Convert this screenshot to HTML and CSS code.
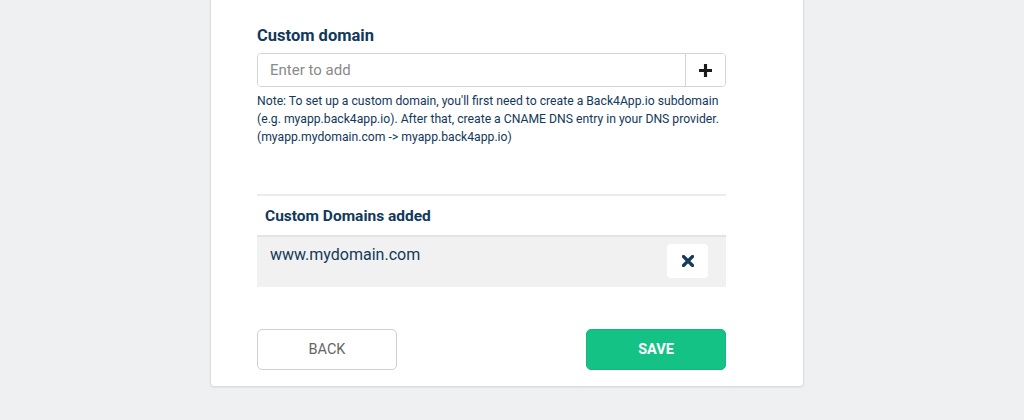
FILE: index.html
```html
<!DOCTYPE html>
<html>
<head>
<meta charset="utf-8">
<link rel="stylesheet" href="styles.css">
</head>
<body>
<div class="card">
  <h2 class="title">Custom domain</h2>
  <div class="input-group">
    <input class="input" type="text" placeholder="Enter to add">
    <button class="add-btn" aria-label="Add">
      <svg width="13" height="13" viewBox="0 0 14 14"><path d="M5.3 0h3.4v5.3H14v3.4H8.7V14H5.3V8.7H0V5.3h5.3z" fill="#1b1b1b"/></svg>
    </button>
  </div>
  <p class="note">Note: To set up a custom domain, you'll first need to create a Back4App.io subdomain (e.g. myapp.back4app.io). After that, create a CNAME DNS entry in your DNS provider. (myapp.mydomain.com -&gt; myapp.back4app.io)</p>
  <div class="list">
    <h3 class="list-title">Custom Domains added</h3>
    <div class="row">
      <span class="domain">www.mydomain.com</span>
      <button class="remove-btn" aria-label="Remove">
        <svg width="12" height="12" viewBox="0 0 12 12"><path d="M1.5 1.5l9 9M10.5 1.5l-9 9" stroke="#163b5c" stroke-width="3.2" stroke-linecap="round"/></svg>
      </button>
    </div>
  </div>
  <div class="actions">
    <button class="btn btn-back">BACK</button>
    <button class="btn btn-save">SAVE</button>
  </div>
</div>
</body>
</html>
```

FILE: styles.css
```css
* { box-sizing: border-box; }
html, body { margin: 0; padding: 0; }
body {
  background: #eff0f2;
  font-family: Roboto, "Liberation Sans", Arial, sans-serif;
  height: 420px;
  overflow: hidden;
}
.card {
  width: 594px;
  margin: -4px 0 0 210px;
  background: #fff;
  border: 1px solid #dcdcdc;
  border-radius: 4px;
  box-shadow: 0 1px 2px rgba(0,0,0,0.06);
  padding: 27px 77px 16px 46px;
}
.title {
  margin: 0 0 5px;
  font-size: 16.5px;
  line-height: 24px;
  font-weight: 700;
  color: #12395a;
}
.input-group {
  display: flex;
  height: 34px;
  border: 1px solid #d4d4d4;
  border-radius: 4px;
  overflow: hidden;
}
.input {
  flex: 1;
  border: none;
  outline: none;
  padding: 0 12px;
  font-family: inherit;
  font-size: 15px;
  color: #333;
  background: #fff;
}
.input::placeholder { color: #8a8a8a; }
.add-btn {
  width: 40px;
  border: none;
  border-left: 1px solid #d4d4d4;
  background: #fff;
  display: flex;
  align-items: center;
  justify-content: center;
  padding: 0;
}
.note {
  margin: 5px -6px 0 0;
  font-size: 12.2px;
  line-height: 18px;
  color: #12395a;
}
.list {
  margin-top: 48px;
  border-top: 2px solid #ebebeb;
}
.list-title {
  margin: 0;
  height: 39px;
  display: flex;
  align-items: center;
  padding-left: 8px;
  font-size: 15.5px;
  font-weight: 700;
  color: #12395a;
}
.row {
  display: flex;
  align-items: flex-start;
  justify-content: space-between;
  height: 52px;
  background: #f1f1f1;
  border-top: 2px solid #e4e4e4;
  padding: 7px 17px 0 13px;
}
.domain {
  font-size: 16px;
  line-height: 22px;
  color: #12395a;
}
.remove-btn {
  width: 41px;
  height: 34px;
  margin: 0 1px 0 0;
  border: none;
  border-radius: 4px;
  background: #fff;
  display: flex;
  align-items: center;
  justify-content: center;
  padding: 0;
}
.actions {
  display: flex;
  justify-content: space-between;
  margin-top: 42px;
}
.btn {
  width: 140px;
  height: 41px;
  border-radius: 5px;
  font-family: inherit;
  font-size: 14.5px;
}
.btn-back {
  background: #fff;
  border: 1px solid #cfcfcf;
  color: #666;
}
.btn-save {
  background: #15c286;
  border: 1px solid #13b87e;
  color: #fff;
  font-weight: 700;
}
```
